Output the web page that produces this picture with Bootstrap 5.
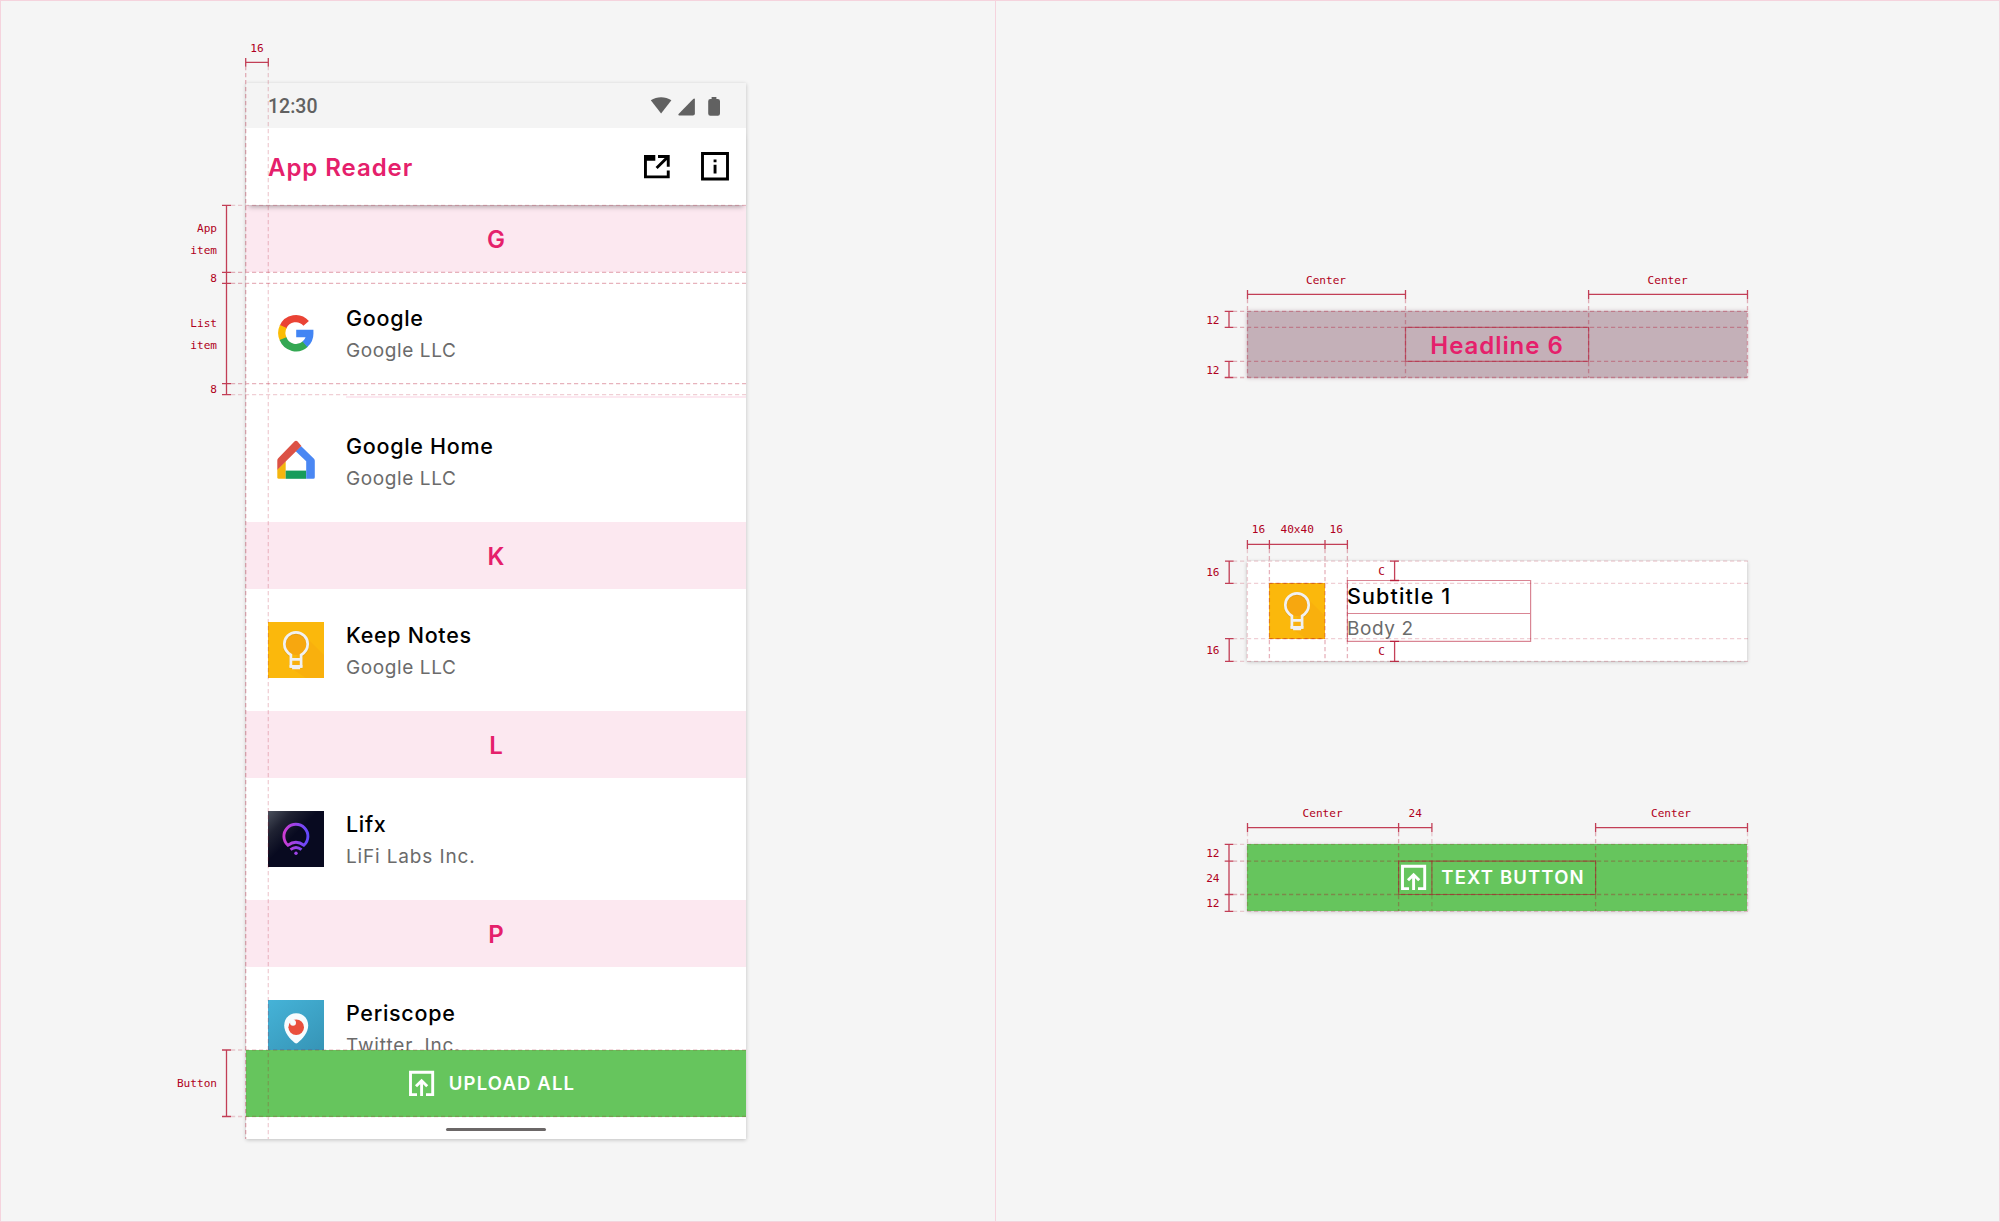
<!DOCTYPE html>
<html lang="en">
<head>
<meta charset="utf-8">
<meta name="viewport" content="width=device-width, initial-scale=1">
<title>App Reader – layout spec</title>
<link rel="stylesheet" href="https://cdn.jsdelivr.net/npm/bootstrap@5.3.0/dist/css/bootstrap.min.css">
<style>
  :root { --pink: #e5206b; --blush: #fce8f0; --leaf: #66c55d; --spec: #b00020; --edge: #f5d3dd; }
  body { background: #f5f5f5; color: #000; font-family: Inter, "Open Sans", sans-serif; overflow: hidden; }
  .board { width: 2000px; height: 1222px; }
  .pane-phone { width: 996px; padding: 82px 0 0 245px; border: 1px solid var(--edge); }
  .pane-parts { border: 1px solid var(--edge); border-left: 0; padding: 310px 0 0 251px; }
  .phone { width: 500px; height: 1056px; background: #fff; box-shadow: 0 1px 4px rgba(0,0,0,.22); }
  .status { height: 45px; background: #f4f4f4; color: #616161; padding: 0 26px 0 22px; font: 500 19.5px/45px Roboto, sans-serif; }
  .status span { padding-top: 1px; }
  .appbar { height: 77px; padding: 0 17px 0 22px; background: #fff; color: var(--pink); box-shadow: 0 5px 5px -3px rgba(0,0,0,.3); z-index: 1; }
  .appbar .title6 { padding-top: 2px; }
  .open-icon { margin-right: 31px; }
  .title6 { font-size: 24px; font-weight: 600; letter-spacing: .95px; line-height: 33px; }
  .feed { height: 845px; }
  .letter { height: 67px; background: var(--blush); color: var(--pink); padding-top: 2px; }
  .letter.title6 { letter-spacing: 0; }
  .entry { height: 122px; padding: 2px 0 0 22px; }
  .rule { height: 6px; padding: 2px 0 0 100px; }
  .rule div { height: 2px; background: var(--blush); }
  .thumb { width: 56px; height: 56px; margin: -2px 22px 0 0; }
  .sub1 { font-size: 21.5px; font-weight: 500; line-height: 31px; letter-spacing: .7px; }
  .sub1.wide { letter-spacing: 1.15px; }
  .body2 { font-size: 19px; line-height: 31px; padding-top: 1px; color: #6b6b6b; letter-spacing: .6px; }
  .body2.lifi { letter-spacing: .85px; }
  .cta { height: 67px; background: var(--leaf); color: #fff; font-weight: 600; font-size: 18.5px; letter-spacing: 1.15px; z-index: 1; }
  .cta svg { margin-right: 11px; }
  .cta span { padding: 1px 12px 0 0; }
  .navbar-strip { height: 22px; }
  .homebar { width: 100px; height: 3px; border-radius: 2px; background: #6b6767; margin-top: 3px; }
  .part { width: 500px; }
  .part-head { height: 67px; background: #c4b0b8; color: var(--pink); box-shadow: 0 0 4px #c9b9bf; margin-bottom: 183px; padding-top: 2px; }
  .part-row { height: 100px; background: #fff; padding: 2px 0 0 22px; box-shadow: 0 1px 4px rgba(0,0,0,.22); margin-bottom: 183px; }
  .part-cta { box-shadow: 0 1px 4px rgba(0,0,0,.18); }
  .notes { pointer-events: none; z-index: 5; }
  .notes text { font: 11.1px "DejaVu Sans Mono", monospace; fill: var(--spec); }
  .notes path { fill: none; stroke: var(--spec); }
  .dim { stroke-width: 1.3; opacity: .75; }
  .dash { stroke-width: 1.3; stroke-dasharray: 4.2 2.8; opacity: .19; }
  .dash-strong { stroke-width: 1.3; stroke-dasharray: 4.2 2.8; opacity: .3; }
  .frame { stroke-width: 1.2; opacity: .48; }
</style>
</head>
<body>
<svg width="0" height="0" class="d-none">
  <symbol id="upload" viewBox="0 0 33 33">
    <path d="M12 27.6H5.500V5.200h22.200v22.400H21M16.600 29V14.500M11 19.300l5.600-5.600 5.600 5.600" fill="none" stroke="#fff" stroke-width="2.900"/>
  </symbol>
  <symbol id="keep" viewBox="0 0 56 56">
    <path fill="#fbb80c" d="M0 0h56v56H0z"/>
    <path fill="#f9b00d" d="M37.500 14.500 56 33v23H38L23 46z"/>
    <circle cx="28" cy="22" r="11" fill="#f7a70f"/>
    <g stroke="#c98a12" stroke-opacity=".35" fill="none" stroke-width="2.800" transform="translate(0 1)"><path d="M22.900 44V33c-3.400-2.200-6.600-5.400-6.600-11a11.700 11.700 0 0 1 23.400 0c0 5.600-3.200 8.800-6.600 11v11z"/></g>
    <path d="M22.900 44.300V33c-3.400-2.200-6.600-5.400-6.600-11a11.700 11.700 0 0 1 23.400 0c0 5.600-3.200 8.800-6.600 11v11.300zM22 37.300h12" fill="none" stroke="#f1f1f1" stroke-width="2.700"/>
    <path fill="#f1f1f1" d="M21.600 43h12.800v2.800h-2.300v1.400h-8v-1.400h-2.500z"/>
  </symbol>
</svg>

<div class="board d-flex position-relative">
  <section class="pane-phone flex-shrink-0">
    <div class="phone d-flex flex-column">
      <div class="status d-flex justify-content-between align-items-center flex-shrink-0">
        <span>12:30</span>
        <svg width="70" height="22" viewBox="0 0 70 22" fill="#616161">
          <path d="M11.100 18.500.8 5.300C7 1.100 15.200 1.100 21.400 5.300z"/>
          <path d="M44.900 4.200V18.600q0 2-2 2H29.200q-1.600-.2-.6-1.500L43.200 4q1.500-1 1.700.2z"/>
          <path d="M61.600 2h4.800v2H67.800q2.200 0 2.200 2.200V18.500q0 2.200-2.200 2.200h-7.400q-2.200 0-2.200-2.200V6.200Q58.200 4 60.400 4h1.200z"/>
        </svg>
      </div>
      <header class="appbar d-flex align-items-center position-relative flex-shrink-0">
        <span class="title6 me-auto">App Reader</span>
        <svg width="26" height="24" viewBox="0 0 26 24" fill="#000" class="open-icon">
          <path d="M0 0h11.300v5.700H2.900v14.700h19.900v-4.800h2.900v7.700H0zM14 0h11.700v11.800h-2.900V5L13.600 14l-2-2L20.700 2.900H14z"/>
        </svg>
        <svg width="28" height="29" viewBox="0 0 28 29">
          <path d="M1.500 1.500h25v25.500h-25z" fill="none" stroke="#000" stroke-width="2.900"/>
          <path d="M12.600 7.600h2.900v2.700h-2.900zM12.600 12.700h2.900v8.800h-2.900z"/>
        </svg>
      </header>
      <div class="feed d-flex flex-column overflow-hidden">
        <div class="letter title6 d-flex align-items-center justify-content-center flex-shrink-0">G</div>
        <div class="entry d-flex align-items-center flex-shrink-0">
          <svg class="thumb" viewBox="0 0 56 56">
            <g fill="none" stroke-width="7.300" transform="translate(.4 .4)">
              <path stroke="#ea4335" d="M14.600 21.700A14 14.300 0 0 1 37.800 17.900"/>
              <path stroke="#fbbc05" d="M14.900 33.900A14 14.300 0 0 1 14.900 21.100"/>
              <path stroke="#34a853" d="M37 38.600A14 14.300 0 0 1 14.600 33.300"/>
              <path stroke="#4285f4" d="M27.800 28.100H41.400A14 14 0 0 1 36.500 38.900"/>
            </g>
          </svg>
          <div><div class="sub1">Google</div><div class="body2">Google LLC</div></div>
        </div>
        <div class="rule flex-shrink-0"><div></div></div>
        <div class="entry d-flex align-items-center flex-shrink-0">
          <svg class="thumb" viewBox="0 0 56 56">
            <g transform="translate(0 -.7)">
            <path fill="#f4b50f" d="M9.300 37l8.400-8.300V46.500H10.800q-1.500 0-1.500-1.500z"/>
            <path fill="#179c5b" d="M17.700 38.300h20.500v8.200H17.700z"/>
            <path fill="#4a87f3" d="M33.200 14 46 26.500q.8.900.8 2V45q0 1.500-1.500 1.500h-7.100V29L27.400 18.700z"/>
            <path fill="#dc5145" d="M26.400 9.100q1.600-1.300 3.200 0l3.800 4.500L9.300 37.400V28.200q0-1.400.9-2.300z"/>
            </g>
          </svg>
          <div><div class="sub1">Google Home</div><div class="body2">Google LLC</div></div>
        </div>
        <div class="letter title6 d-flex align-items-center justify-content-center flex-shrink-0">K</div>
        <div class="entry d-flex align-items-center flex-shrink-0">
          <svg class="thumb"><use href="#keep"/></svg>
          <div><div class="sub1">Keep Notes</div><div class="body2">Google LLC</div></div>
        </div>
        <div class="letter title6 d-flex align-items-center justify-content-center flex-shrink-0">L</div>
        <div class="entry d-flex align-items-center flex-shrink-0">
          <svg class="thumb" viewBox="0 0 56 56">
            <defs>
              <linearGradient id="night" x1="0" y1="0" x2=".45" y2=".45"><stop stop-color="#4b515d"/><stop offset=".5" stop-color="#1f2232"/><stop offset="1" stop-color="#080a20"/></linearGradient>
              <linearGradient id="neon" gradientUnits="userSpaceOnUse" x1="14" y1="0" x2="42" y2="0"><stop stop-color="#d43bd0"/><stop offset="1" stop-color="#5a4bff"/></linearGradient>
            </defs>
            <path fill="url(#night)" d="M0 0h56v56H0z"/>
            <g fill="none" stroke="url(#neon)" stroke-width="2.900">
              <path d="M19.900 34.200A12 12 0 1 1 35.900 34.200Q28 28.500 19.900 34.200z"/>
              <path d="M22.500 38.600q5.500-4.300 11 0"/>
            </g>
            <circle cx="28" cy="42.200" r="1.700" fill="#a044ea"/>
          </svg>
          <div><div class="sub1">Lifx</div><div class="body2 lifi">LiFi Labs Inc.</div></div>
        </div>
        <div class="letter title6 d-flex align-items-center justify-content-center flex-shrink-0">P</div>
        <div class="entry d-flex align-items-center flex-shrink-0">
          <svg class="thumb" viewBox="0 0 56 56">
            <defs><linearGradient id="sea" x1="0" y1="0" x2=".7" y2="1"><stop stop-color="#45b3d8"/><stop offset="1" stop-color="#3796b8"/></linearGradient></defs>
            <path fill="url(#sea)" d="M0 0h56v56H0z"/>
            <path fill="#f7fcfe" d="M28.200 13.300c7 0 12 5.300 12 12.200 0 7-5.500 13.400-10.700 17.500q-1.300.9-2.600 0C21.700 38.900 16.200 32.500 16.200 25.500c0-6.900 5-12.200 12-12.200z"/>
            <circle cx="28.200" cy="27.200" r="7.800" fill="#e94f3d"/>
            <circle cx="25" cy="22.800" r="3" fill="#f7fcfe"/>
          </svg>
          <div><div class="sub1">Periscope</div><div class="body2 lifi">Twitter, Inc.</div></div>
        </div>
      </div>
      <div class="cta d-flex align-items-center justify-content-center flex-shrink-0">
        <svg width="33" height="33"><use href="#upload"/></svg><span>UPLOAD ALL</span>
      </div>
      <div class="navbar-strip d-flex align-items-center justify-content-center"><div class="homebar"></div></div>
    </div>
  </section>

  <section class="pane-parts flex-grow-1">
    <div class="part part-head title6 d-flex align-items-center justify-content-center">Headline 6</div>
    <div class="part part-row d-flex align-items-center">
      <svg class="thumb"><use href="#keep"/></svg>
      <div><div class="sub1 wide">Subtitle 1</div><div class="body2">Body 2</div></div>
    </div>
    <div class="part part-cta cta d-flex align-items-center justify-content-center">
      <svg width="33" height="33"><use href="#upload"/></svg><span>TEXT BUTTON</span>
    </div>
  </section>

  <!-- Redlines drawn over the screens -->
  <svg class="notes position-absolute top-0 start-0" width="2000" height="1222" viewBox="0 0 2000 1222">
    <path class="dash-strong" d="M245.700 66V1139M231 272.300H746M231 283.400H746M231 383.700H746"/>
    <path class="dash" d="M268.300 66V1139M231 205.300H746M231 394.600H746M231 1050H746M231 1116.500H746"/>
    <path class="dim" d="M245.700 62.400H268.300M245.700 58V66.500M268.300 58V66.500M226.500 205.300V394.600M222 205.300h9M222 272.300h9M222 283.400h9M222 383.700h9M222 394.600h9M226.500 1050V1116.500M222 1050h9M222 1116.500h9"/>
    <text x="257" y="51.700" text-anchor="middle">16</text>
    <g text-anchor="end">
      <text x="217" y="232">App</text><text x="217" y="254">item</text><text x="217" y="281.700">8</text>
      <text x="217" y="326.600">List</text><text x="217" y="348.700">item</text><text x="217" y="393">8</text>
      <text x="217" y="1087.400">Button</text>
    </g>

    <path class="dash-strong" d="M1247.500 299V377.500M1405.500 299V377.500M1588.600 299V377.500M1747.500 299V377.500M1233 311.300H1748M1233 327.400H1748M1233 361.300H1748M1233 377.500H1748"/>
    <path class="dim" d="M1247.500 294.400H1405.500M1588.600 294.400H1747.500M1247.500 290v9M1405.500 290v9M1588.600 290v9M1747.500 290v9M1229 311.300v16.100M1229 361.300v16.200M1224.700 311.300h8.500M1224.700 327.400h8.500M1224.700 361.300h8.500M1224.700 377.500h8.500"/>
    <path class="frame" d="M1405.500 327.400H1588.600V361.300H1405.500z"/>
    <text x="1326" y="283.600" text-anchor="middle">Center</text><text x="1667.600" y="283.600" text-anchor="middle">Center</text>
    <text x="1219.500" y="324" text-anchor="end">12</text><text x="1219.500" y="374" text-anchor="end">12</text>

    <path class="dash" d="M1247.400 549V661.300M1233 561.200H1748M1233 583.400H1748M1233 638.600H1748M1233 661.400H1748"/>
    <path class="dash-strong" d="M1269.400 549V661.300M1325 549V661.300M1347.400 549V661.300M1269.400 583.400H1325M1269.400 638.600H1325"/>
    <path class="dim" d="M1247.400 544.400H1347.400M1247.400 540v9M1269.400 540v9M1325 540v9M1347.400 540v9M1229.200 561.200v22.200M1229.200 638.600v22.800M1225 561.200h8.500M1225 583.400h8.500M1225 638.600h8.500M1225 661.400h8.500M1394.600 561.200v19.300M1394.600 641.400v20M1390 561.200h9M1390 580.500h9M1390 641.400h9M1390 661.400h9"/>
    <path class="frame" d="M1347.400 580.500H1530.600V641.400H1347.400zM1347.400 613.500H1530.600"/>
    <g text-anchor="middle"><text x="1258.500" y="533.400">16</text><text x="1297.200" y="533.400">40x40</text><text x="1336.300" y="533.400">16</text><text x="1381.500" y="575.300">C</text><text x="1381.500" y="655.400">C</text></g>
    <text x="1219.500" y="576.400" text-anchor="end">16</text><text x="1219.500" y="654.400" text-anchor="end">16</text>

    <path class="dash" d="M1247.500 832V911.300M1747.500 832V911.300M1233 844.400H1748M1233 911.300H1748M1431.900 832V911.300"/>
    <path class="dash-strong" d="M1398.600 832V911.300M1595.600 832V911.300M1233 861.200H1748M1233 894.500H1748"/>
    <path class="dim" d="M1247.500 827.600H1431.900M1595.600 827.600H1747.500M1247.500 823v9M1398.600 823v9M1431.900 823v9M1595.600 823v9M1747.500 823v9M1229 844.400V911.300M1224.700 844.400h8.500M1224.700 861.200h8.500M1224.700 894.500h8.500M1224.700 911.300h8.500"/>
    <path class="frame" d="M1398.600 861.200H1595.600V894.500H1398.600zM1431.900 861.200V894.500"/>
    <g text-anchor="middle"><text x="1322.600" y="817">Center</text><text x="1415.300" y="817">24</text><text x="1671" y="817">Center</text></g>
    <g text-anchor="end"><text x="1219.500" y="857">12</text><text x="1219.500" y="882">24</text><text x="1219.500" y="907">12</text></g>
  </svg>
</div>
<script src="https://cdn.jsdelivr.net/npm/bootstrap@5.3.0/dist/js/bootstrap.bundle.min.js"></script>
</body>
</html>
